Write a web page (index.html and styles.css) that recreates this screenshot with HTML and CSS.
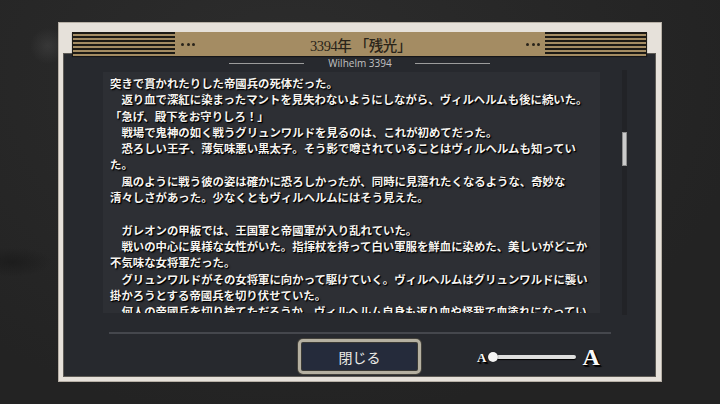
FILE: index.html
```html
<!DOCTYPE html>
<html lang="ja">
<head>
<meta charset="utf-8">
<title>3394年 「残光」</title>
<link rel="stylesheet" href="styles.css">
</head>
<body>
<div class="frame">
  <div class="header">
    <div class="stripes"></div>
    <div class="dots dots-left"><i></i><i></i><i></i></div>
    <div class="title">3394年 「残光」</div>
    <div class="dots dots-right"><i></i><i></i><i></i></div>
    <div class="stripes stripes-right"></div>
  </div>
  <div class="panel">
    <div class="sub"><span class="sub-line"></span><span class="sub-text">Wilhelm 3394</span><span class="sub-line"></span></div>
    <div class="body-row">
      <div class="story">
        <p>突きで貫かれたりした帝國兵の死体だった。<br>　返り血で深紅に染まったマントを見失わないようにしながら、ヴィルヘルムも後に続いた。<br>「急げ、殿下をお守りしろ！」<br>　戦場で鬼神の如く戦うグリュンワルドを見るのは、これが初めてだった。<br>　恐ろしい王子、薄気味悪い黒太子。そう影で噂されていることはヴィルヘルムも知ってい<br>た。<br>　風のように戦う彼の姿は確かに恐ろしかったが、同時に見蕩れたくなるような、奇妙な<br>清々しさがあった。少なくともヴィルヘルムにはそう見えた。<br><br>　ガレオンの甲板では、王国軍と帝國軍が入り乱れていた。<br>　戦いの中心に異様な女性がいた。指揮杖を持って白い軍服を鮮血に染めた、美しいがどこか<br>不気味な女将軍だった。<br>　グリュンワルドがその女将軍に向かって駆けていく。ヴィルヘルムはグリュンワルドに襲い<br>掛かろうとする帝國兵を切り伏せていた。<br>　何人の帝國兵を切り捨てただろうか、ヴィルヘルム自身も返り血や怪我で血塗れになってい</p>
      </div>
      <div class="scroll"><div class="thumb"></div></div>
    </div>
    <div class="sep"></div>
    <div class="controls">
      <div></div>
      <button class="close">閉じる</button>
      <div class="slider">
        <span class="a-small">A</span>
        <span class="knob"></span>
        <span class="track"></span>
        <span class="a-big">A</span>
      </div>
    </div>
  </div>
</div>
</body>
</html>
```
FILE: styles.css
```css
html, body {
  margin: 0;
  padding: 0;
}
body {
  width: 720px;
  height: 404px;
  overflow: hidden;
  background:
    radial-gradient(circle at 48px 46px, rgba(85, 85, 85, 0.35), rgba(60, 60, 60, 0) 18px),
    radial-gradient(ellipse at 12px 262px, rgba(20, 20, 20, 0.5), rgba(20, 20, 20, 0) 40px),
    radial-gradient(ellipse at 40% 20%, #2d2d2d, #232323 75%);
  display: flow-root;
}
.frame {
  box-sizing: border-box;
  width: 604px;
  height: 360px;
  margin: 22px 0 0 58px;
  background: #e6e1da;
  border: 1px solid #b7b0a6;
  padding: 9px 5px 4px 4px;
  display: flex;
  flex-direction: column;
}
.header {
  height: 24px;
  margin: 0 9px -3px;
  background: #a48c63;
  display: flex;
  align-items: center;
  position: relative;
  z-index: 1;
  box-shadow: 0 1px 1px rgba(0, 0, 0, 0.45);
  flex: none;
}
.stripes {
  width: 103px;
  align-self: stretch;
  background: repeating-linear-gradient(to bottom, #1d1a15 0 1.6px, #a48c63 1.6px 4px);
  border-left: 1px solid #1d1a15;
  box-sizing: border-box;
}
.stripes-right {
  width: 102px;
  border-left: 0;
  border-right: 1px solid #1d1a15;
}
.dots {
  display: flex;
  gap: 2.5px;
}
.dots i {
  display: block;
  width: 3px;
  height: 3px;
  border-radius: 50%;
  background: #29231a;
}
.dots-left { margin-left: 6px; }
.dots-right { margin-right: 5px; }
.title {
  flex: 1;
  text-align: center;
  font-family: "Liberation Serif", "Noto Sans CJK JP", serif;
  font-size: 14.5px;
  font-weight: 500;
  color: #2a2419;
  letter-spacing: -0.4px;
}
.panel {
  flex: 1;
  background: #27292e;
  border: 1px solid #5e5b56;
  display: flex;
  flex-direction: column;
  min-height: 0;
}
.sub {
  display: flex;
  align-items: center;
  justify-content: center;
  height: 12px;
  margin-top: 3px;
  flex: none;
}
.sub-line {
  width: 75px;
  height: 1px;
  background: #9c9c9c;
}
.sub-text {
  margin: 0 23px 0 24px;
  font-family: "Open Sans", "Liberation Sans", sans-serif;
  font-size: 10px;
  color: #c2c2c2;
  line-height: 12px;
}
.body-row {
  display: flex;
  margin-top: 3px;
  flex: none;
}
.story {
  margin-left: 39px;
  width: 497px;
  height: 241px;
  box-sizing: border-box;
  padding: 3px 0 0 7px;
  background: #2d2f34;
  overflow: hidden;
}
.story p {
  margin: 0;
  font-family: "Noto Sans CJK JP", sans-serif;
  font-size: 11.4px;
  line-height: 16.3px;
  font-weight: 700;
  color: #f6f4f0;
  white-space: nowrap;
  text-shadow: 1px 1px 0 #000, 1px 1px 2px #000;
}
.scroll {
  margin: -2px 0 0 22px;
  width: 5px;
  height: 245px;
  background: #222327;
  display: flex;
  flex-direction: column;
}
.thumb {
  margin-top: 62px;
  height: 34px;
  background: #cbcbcb;
  border: 1px solid #8d8d8d;
  box-sizing: border-box;
}
.sep {
  margin: 17px 0 0 45px;
  width: 502px;
  height: 2px;
  background: #45474d;
  flex: none;
}
.controls {
  display: grid;
  grid-template-columns: 1fr auto 1fr;
  align-items: center;
  margin-top: 5px;
}
.close {
  width: 123px;
  height: 35px;
  box-sizing: border-box;
  border: 3px solid #b5b0a1;
  border-radius: 5px;
  background: #252b3b;
  color: #ecebe7;
  font-family: "Noto Sans CJK JP", sans-serif;
  font-size: 14px;
  padding: 0;
  box-shadow: inset 0 0 0 1px #3b3a35, 0 0 0 1px #44423c;
}
.slider {
  display: flex;
  align-items: center;
  margin-left: 56px;
}
.a-small, .a-big {
  font-family: "Liberation Serif", serif;
  font-weight: 700;
  color: #fafafa;
  text-shadow: 1px 1px 0 #000, 2px 2px 1px #000;
}
.a-small {
  font-size: 13px;
  line-height: 13px;
  margin-top: 2px;
}
.knob {
  width: 10px;
  height: 10px;
  border-radius: 50%;
  background: #f4f4f4;
  margin-left: 2px;
  position: relative;
  z-index: 1;
  box-shadow: 0 0 1px #000;
}
.track {
  width: 83px;
  height: 4px;
  margin-left: -5px;
  border-radius: 2px;
  background: #dedede;
  box-shadow: 0 1px 1px #000;
}
.a-big {
  font-size: 24px;
  line-height: 24px;
  margin-left: 6px;
}
```
